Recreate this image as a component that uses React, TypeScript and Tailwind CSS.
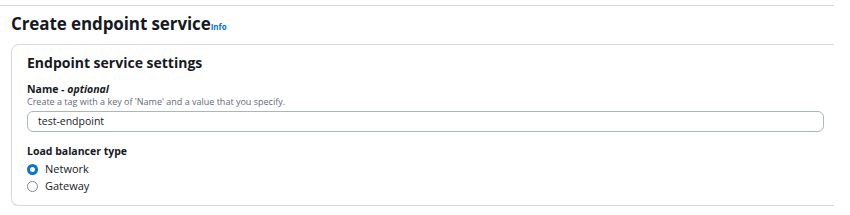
const App = () => {
    return (
        <div className="w-[850px] h-[215px] bg-white overflow-hidden" style={{ fontFamily: '"Open Sans", "Noto Sans", sans-serif' }}>
            <div className="w-[834px] overflow-hidden">
                <div className="mt-[5px] border-t border-[#d5dbdb]"></div>
                <div className="pl-[11px] pt-[6px] mb-[8px] flex items-baseline">
                    <h1 className="text-[17px] leading-[24px] font-bold text-[#16191f] tracking-[-0.1px]">Create endpoint service</h1>
                    <span className="text-[8px] font-bold text-[#0972d3]">Info</span>
                </div>
                <div className="ml-[11px] w-[860px] border border-[#d5dbdb] rounded-[8px] pl-[15px] pt-[9px] pb-[10px] shadow-[0_1px_1px_rgba(0,28,36,0.12)]">
                    <h2 className="text-[14px] leading-[18px] font-bold text-[#16191f]">Endpoint service settings</h2>
                    <div className="mt-[10px] text-[10.5px] leading-[14px] font-bold text-[#16191f]">
                        Name - <span className="italic">optional</span>
                    </div>
                    <div className="text-[9px] leading-[12px] text-[#5f6b7a]">Create a tag with a key of 'Name' and a value that you specify.</div>
                    <div className="mt-[3px] w-[797px] h-[21px] border border-[#aab7b8] rounded-[6px] flex items-center pl-[10px] text-[10.5px] text-[#16191f]">
                        test-endpoint
                    </div>
                    <div className="mt-[12px] text-[10.5px] leading-[14px] font-bold text-[#16191f]">Load balancer type</div>
                    <div className="mt-[3px] flex flex-col">
                        <label className="h-[17px] flex items-center gap-[7px] text-[11px] text-[#16191f]">
                            <span className="shrink-0 w-[11px] h-[11px] rounded-full border-[3px] border-[#0972d3] bg-white"></span>
                            Network
                        </label>
                        <label className="h-[17px] flex items-center gap-[7px] text-[11px] text-[#16191f]">
                            <span className="shrink-0 w-[11px] h-[11px] rounded-full border border-[#7d8998] bg-white"></span>
                            Gateway
                        </label>
                    </div>
                </div>
            </div>
        </div>
    );
};

export default App;
